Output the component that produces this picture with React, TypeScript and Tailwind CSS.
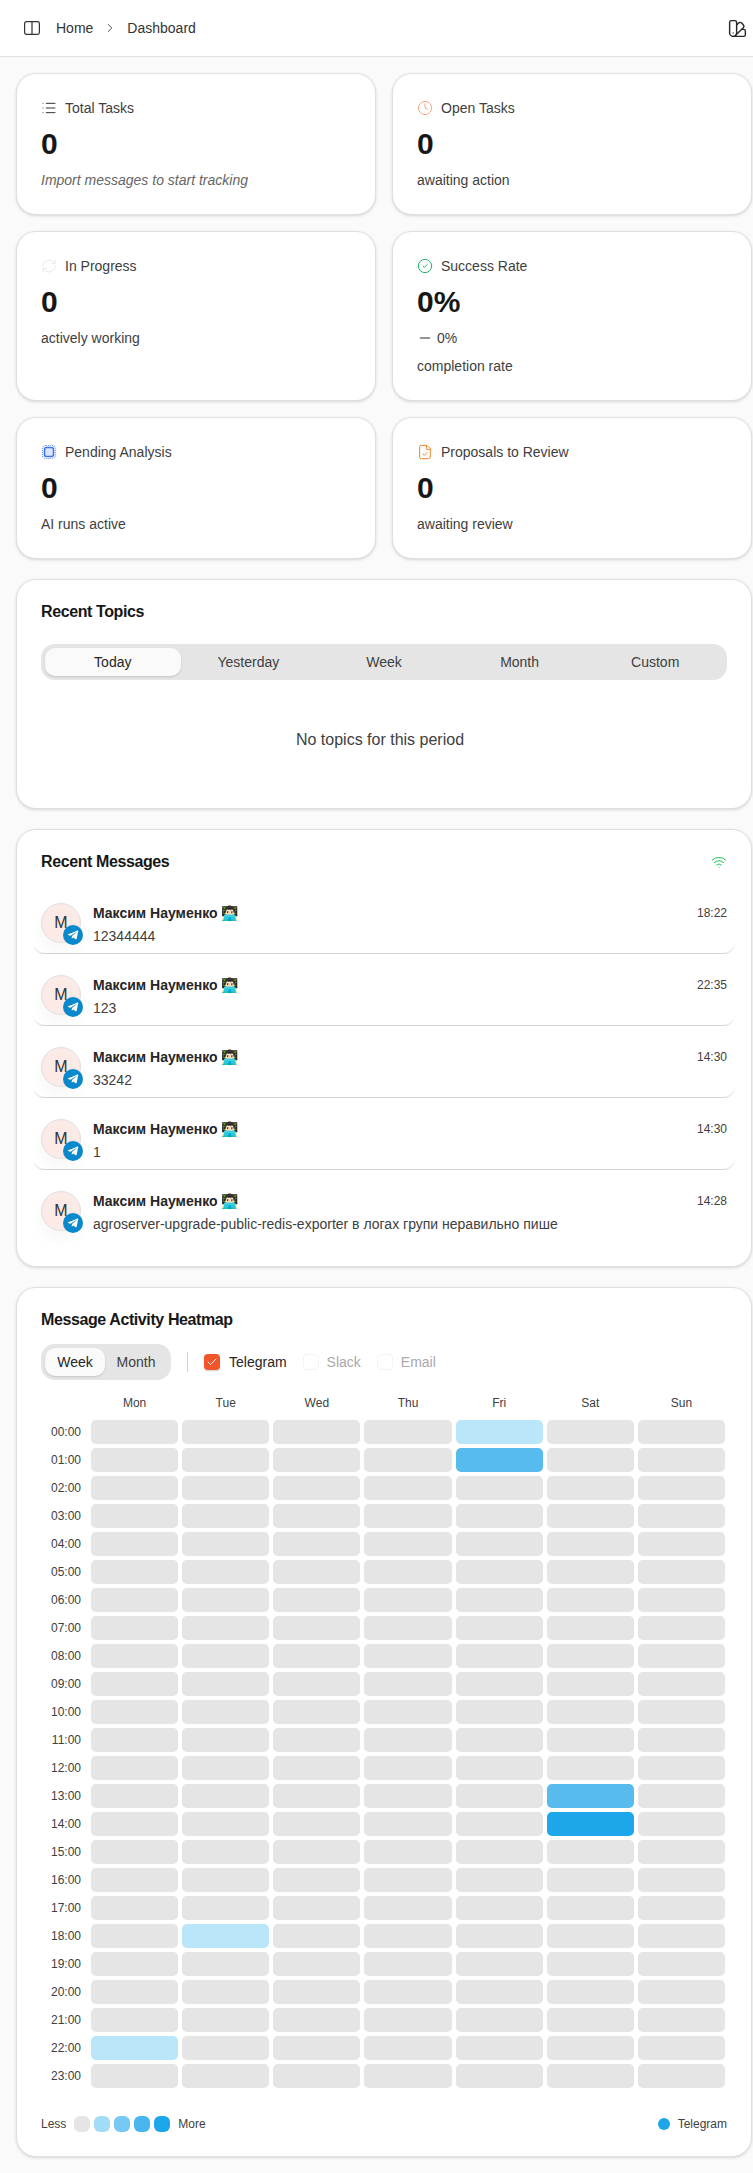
import { List, Clock, RefreshCw, CircleCheck, FileCheck, Minus, Wifi, SwatchBook, ChevronRight, Check } from "lucide-react";
import { FaTelegramPlane } from "react-icons/fa";

function Stat({ icon, title, value, children }: { icon: React.ReactNode; title: string; value: string; children: React.ReactNode }) {
  return (
    <div className="rounded-[20px] border border-[#e0e0e0] bg-white p-6 shadow-[0_1px_3px_rgba(0,0,0,0.15)]">
      <div className="flex h-5 items-center gap-2 text-sm text-[#404040]">
        {icon}
        <span>{title}</span>
      </div>
      <div className="mt-2 text-3xl font-bold text-[#171717]">{value}</div>
      <div className="mt-2 text-sm text-[#404040]">{children}</div>
    </div>
  );
}

const messages = [
  ["12344444", "18:22"],
  ["123", "22:35"],
  ["33242", "14:30"],
  ["1", "14:30"],
  ["agroserver-upgrade-public-redis-exporter в логах групи неравильно пише", "14:28"],
];

const days = ["Mon", "Tue", "Wed", "Thu", "Fri", "Sat", "Sun"];
const hours = Array.from({ length: 24 }, (_, i) => String(i).padStart(2, "0") + ":00");
const hot: Record<string, string> = {
  "4-0": "bg-[#bae6fa]",
  "4-1": "bg-[#58bbee]",
  "5-13": "bg-[#58bbee]",
  "5-14": "bg-[#1ea6ea]",
  "1-18": "bg-[#bae6fa]",
  "0-22": "bg-[#bae6fa]",
};

export default function App() {
  return (
    <div className="min-h-[2173px] bg-[#fafafa] font-['Liberation_Sans',sans-serif] text-[#262626]">
      <header className="flex h-[57px] items-center justify-between border-b border-[#e0e0e0] bg-white pl-6 pr-[5px]">
        <div className="flex items-center text-sm text-[#333]">
          <svg width="16" height="14" viewBox="0 0 16 14" fill="none" stroke="currentColor" strokeWidth="1.2">
            <rect x="0.6" y="0.6" width="14.8" height="12.8" rx="1.8" />
            <line x1="8" y1="0.6" x2="8" y2="13.4" />
          </svg>
          <span className="ml-4">Home</span>
          <ChevronRight className="mx-[10px] h-[14px] w-[14px]" strokeWidth={1.5} />
          <span>Dashboard</span>
        </div>
        <SwatchBook className="h-[21px] w-[21px] text-[#262626]" strokeWidth={1.6} />
      </header>
      <main className="flex flex-col pl-4 pr-[1px] pt-4">
        <div className="grid grid-cols-2 gap-4">
          <Stat icon={<List className="h-4 w-4 text-[#333]" strokeWidth={1.5} />} title="Total Tasks" value="0">
            <span className="italic text-[#666]">Import messages to start tracking</span>
          </Stat>
          <Stat icon={<Clock className="h-4 w-4 text-[#f8a587]" strokeWidth={1.5} />} title="Open Tasks" value="0">awaiting action</Stat>
          <Stat icon={<RefreshCw className="h-4 w-4 text-[#e8e8e8]" strokeWidth={1.5} />} title="In Progress" value="0">actively working</Stat>
          <Stat icon={<CircleCheck className="h-4 w-4 text-[#22b566]" strokeWidth={1.5} />} title="Success Rate" value="0%">
            <div className="flex items-center gap-1">
              <Minus className="h-4 w-4 text-[#737373]" strokeWidth={2} />
              <span>0%</span>
            </div>
            <div className="mt-2">completion rate</div>
          </Stat>
          <Stat
            icon={
              <svg width="16" height="16" viewBox="0 0 16 16" fill="none" className="text-[#3f72ea]">
                <rect x="1.5" y="1.5" width="13" height="13" rx="3.5" stroke="currentColor" strokeWidth="1.2" strokeDasharray="1 1" opacity="0.75" />
                <rect x="3.5" y="3.5" width="9" height="9" rx="2" stroke="currentColor" strokeWidth="1.5" fill="#dbe6fd" />
              </svg>
            }
            title="Pending Analysis"
            value="0"
          >
            AI runs active
          </Stat>
          <Stat icon={<FileCheck className="h-4 w-4 text-[#e8862a]" strokeWidth={1.5} />} title="Proposals to Review" value="0">awaiting review</Stat>
        </div>

        <section className="mt-5 rounded-[20px] border border-[#e0e0e0] bg-white px-6 pb-6 pt-6 shadow-[0_1px_3px_rgba(0,0,0,0.15)]">
          <h2 className="text-base font-bold leading-4 tracking-tight text-[#171717]">Recent Topics</h2>
          <div className="mt-6 grid h-9 grid-cols-5 rounded-[14px] bg-[#e5e5e5] p-1 text-sm">
            <div className="flex items-center justify-center rounded-[10px] bg-[#fafafa] shadow-[0_1px_2px_rgba(0,0,0,0.15)]">Today</div>
            <div className="flex items-center justify-center text-[#404040]">Yesterday</div>
            <div className="flex items-center justify-center text-[#404040]">Week</div>
            <div className="flex items-center justify-center text-[#404040]">Month</div>
            <div className="flex items-center justify-center text-[#404040]">Custom</div>
          </div>
          <div className="pb-8 pr-2 pt-12 text-center text-base text-[#404040]">No topics for this period</div>
        </section>

        <section className="mt-5 rounded-[20px] border border-[#e0e0e0] bg-white px-6 pb-6 pt-6 shadow-[0_1px_3px_rgba(0,0,0,0.15)]">
          <div className="flex items-center justify-between">
            <h2 className="text-base font-bold leading-4 tracking-tight text-[#171717]">Recent Messages</h2>
            <Wifi className="h-4 w-4 text-[#22c55e]" strokeWidth={1.5} />
          </div>
          <div className="-mx-2 mt-3">
            {messages.map(([text, time], i) => (
              <div key={i} className={"flex h-[72px] gap-3 rounded-xl px-2 pt-[21px] " + (i < 4 ? "border-b border-[#d4d4d4]" : "")}>
                <div className="relative h-10 w-10 shrink-0">
                  <div className="flex h-10 w-10 items-center justify-center rounded-full border border-[#e0e0e0] bg-[#fbeae6] text-base text-[#333] shadow-[0_8px_16px_rgba(0,0,0,0.04)]">M</div>
                  <div className="absolute -bottom-[2px] -right-[2px] flex h-5 w-5 items-center justify-center rounded-full bg-[#0a88cc] text-white">
                    <FaTelegramPlane className="h-3 w-3" />
                  </div>
                </div>
                <div className="min-w-0 flex-1">
                  <div className="flex items-center justify-between">
                    <span className="text-sm font-bold text-[#262626]">Максим Науменко 👨🏻‍💻</span>
                    <span className="text-xs text-[#404040]">{time}</span>
                  </div>
                  <div className="mt-[3px] text-sm text-[#404040]">{text}</div>
                </div>
              </div>
            ))}
          </div>
        </section>

        <section className="mt-5 rounded-[20px] border border-[#e0e0e0] bg-white px-6 pb-6 pt-6 shadow-[0_1px_3px_rgba(0,0,0,0.15)]">
          <h2 className="text-base font-bold leading-4 tracking-tight text-[#171717]">Message Activity Heatmap</h2>
          <div className="mt-4 flex items-center text-sm">
            <div className="flex h-9 items-center rounded-[14px] bg-[#e5e5e5] p-1">
              <div className="flex h-7 w-[60px] items-center justify-center rounded-[10px] bg-[#fafafa] shadow-[0_1px_2px_rgba(0,0,0,0.15)]">Week</div>
              <div className="flex h-7 w-[62px] items-center justify-center text-[#404040]">Month</div>
            </div>
            <div className="mx-4 h-5 w-px bg-[#d4d4d4]" />
            <div className="flex h-4 w-4 items-center justify-center rounded bg-[#f0562a] text-white shadow-[0_1px_2px_rgba(0,0,0,0.2)]">
              <Check className="h-3 w-3" strokeWidth={2} />
            </div>
            <span className="ml-[9px]">Telegram</span>
            <div className="ml-4 h-4 w-4 rounded border border-[#eee] bg-white opacity-70" />
            <span className="ml-2 text-[#aaa]">Slack</span>
            <div className="ml-4 h-4 w-4 rounded border border-[#eee] bg-white opacity-70" />
            <span className="ml-2 text-[#aaa]">Email</span>
          </div>
          <div className="mt-[10px] grid grid-cols-[46px_repeat(7,minmax(0,1fr))] gap-1 pr-[2px] text-xs text-[#404040]">
            <div />
            {days.map((d) => (
              <div key={d} className="flex h-[26px] items-center justify-center">{d}</div>
            ))}
            {hours.map((h, r) => (
              <div key={h} className="contents">
                <div className="flex h-6 items-center justify-end pr-[6px]">{h}</div>
                {days.map((d, c) => (
                  <div key={d} className={"h-6 rounded-[5px] " + (hot[c + "-" + r] ?? "bg-[#e5e5e5]")} />
                ))}
              </div>
            ))}
          </div>
          <div className="mt-7 flex items-center justify-between text-xs text-[#404040]">
            <div className="flex items-center gap-1">
              <span className="mr-1">Less</span>
              <div className="h-4 w-4 rounded-[6px] bg-[#e5e5e5]" />
              <div className="h-4 w-4 rounded-[6px] bg-[#a3dcf8]" />
              <div className="h-4 w-4 rounded-[6px] bg-[#76c9f2]" />
              <div className="h-4 w-4 rounded-[6px] bg-[#48b5ee]" />
              <div className="h-4 w-4 rounded-[6px] bg-[#1ea6ea]" />
              <span className="ml-1">More</span>
            </div>
            <div className="flex items-center gap-2">
              <div className="h-3 w-3 rounded-full bg-[#1ea6ea]" />
              <span>Telegram</span>
            </div>
          </div>
        </section>
      </main>
    </div>
  );
}
